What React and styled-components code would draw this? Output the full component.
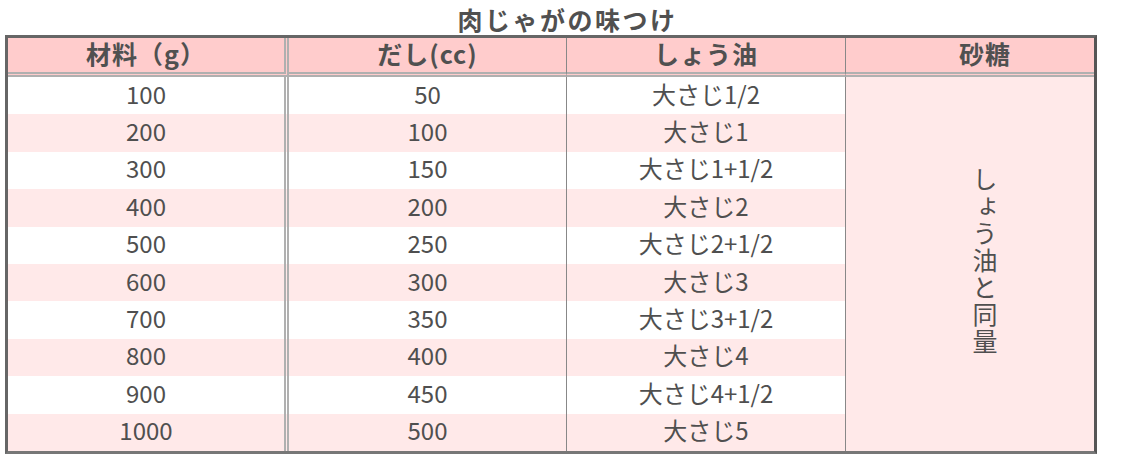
import React from 'react';
import styled, { createGlobalStyle } from 'styled-components';

const GlobalStyle = createGlobalStyle`
  html, body { margin: 0; padding: 0; background: #fff; }
  body {
    font-family: "Noto Sans CJK JP", "Noto Sans", sans-serif;
    color: #505050;
  }
`;

const Page = styled.div`
  display: flex;
  flex-direction: column;
`;

const Title = styled.div`
  height: 35px;
  text-align: center;
  font-size: 25px;
  font-weight: 700;
  letter-spacing: 2.5px;
  line-height: 38px;
  color: #505050;
`;

const Table = styled.table`
  margin-left: 5px;
  width: 1092px;
  table-layout: fixed;
  border-collapse: separate;
  border-spacing: 0;
  border: 3px solid #666;
  border-right-color: #555;
  border-bottom-color: #777;
`;

const Th = styled.th`
  background: #ffcccc;
  height: 31px;
  padding: 0 0 3px ${p => p.$last ? '30px' : '0'};
  font-size: 25px;
  font-weight: 700;
  letter-spacing: 1px;
  line-height: 31px;
  text-align: center;
  color: #505050;
  border-bottom: 5px double #b0b0b0;
  border-right: ${p => p.$double ? '5px double #b0b0b0' : p.$last ? 'none' : '1px solid #888'};
`;

const Row = styled.tr`
  height: 37.4px;
  background: ${p => p.$alt ? '#ffe9e9' : '#fff'};
`;

const Td = styled.td`
  padding: 0 0 4px;
  font-size: 24px;
  line-height: 32px;
  text-align: center;
  color: #4f4f4f;
  border-right: ${p => p.$double ? '5px double #b0b0b0' : '1px solid #888'};
`;

const SugarCell = styled.td`
  background: #ffe9e9;
  padding: 0 0 0 30px;
  text-align: center;
  vertical-align: middle;
`;

const Vertical = styled.span`
  display: inline-block;
  writing-mode: vertical-rl;
  text-orientation: upright;
  font-size: 25px;
  letter-spacing: 2px;
  color: #4f4f4f;
`;

const rows = [
  ['100', '50', '大さじ1/2'],
  ['200', '100', '大さじ1'],
  ['300', '150', '大さじ1+1/2'],
  ['400', '200', '大さじ2'],
  ['500', '250', '大さじ2+1/2'],
  ['600', '300', '大さじ3'],
  ['700', '350', '大さじ3+1/2'],
  ['800', '400', '大さじ4'],
  ['900', '450', '大さじ4+1/2'],
  ['1000', '500', '大さじ5'],
];

export default function App() {
  return (
    <Page>
      <GlobalStyle />
      <Title>肉じゃがの味つけ</Title>
      <Table>
        <colgroup>
          <col style={{ width: 281 }} />
          <col style={{ width: 278 }} />
          <col style={{ width: 279 }} />
          <col />
        </colgroup>
        <thead>
          <tr>
            <Th $double>材料（g）</Th>
            <Th>だし(cc)</Th>
            <Th>しょう油</Th>
            <Th $last>砂糖</Th>
          </tr>
        </thead>
        <tbody>
          {rows.map((r, i) => (
            <Row key={r[0]} $alt={i % 2 === 1}>
              <Td $double>{r[0]}</Td>
              <Td>{r[1]}</Td>
              <Td>{r[2]}</Td>
              {i === 0 && (
                <SugarCell rowSpan={rows.length}>
                  <Vertical>しょう油と同量</Vertical>
                </SugarCell>
              )}
            </Row>
          ))}
        </tbody>
      </Table>
    </Page>
  );
}
